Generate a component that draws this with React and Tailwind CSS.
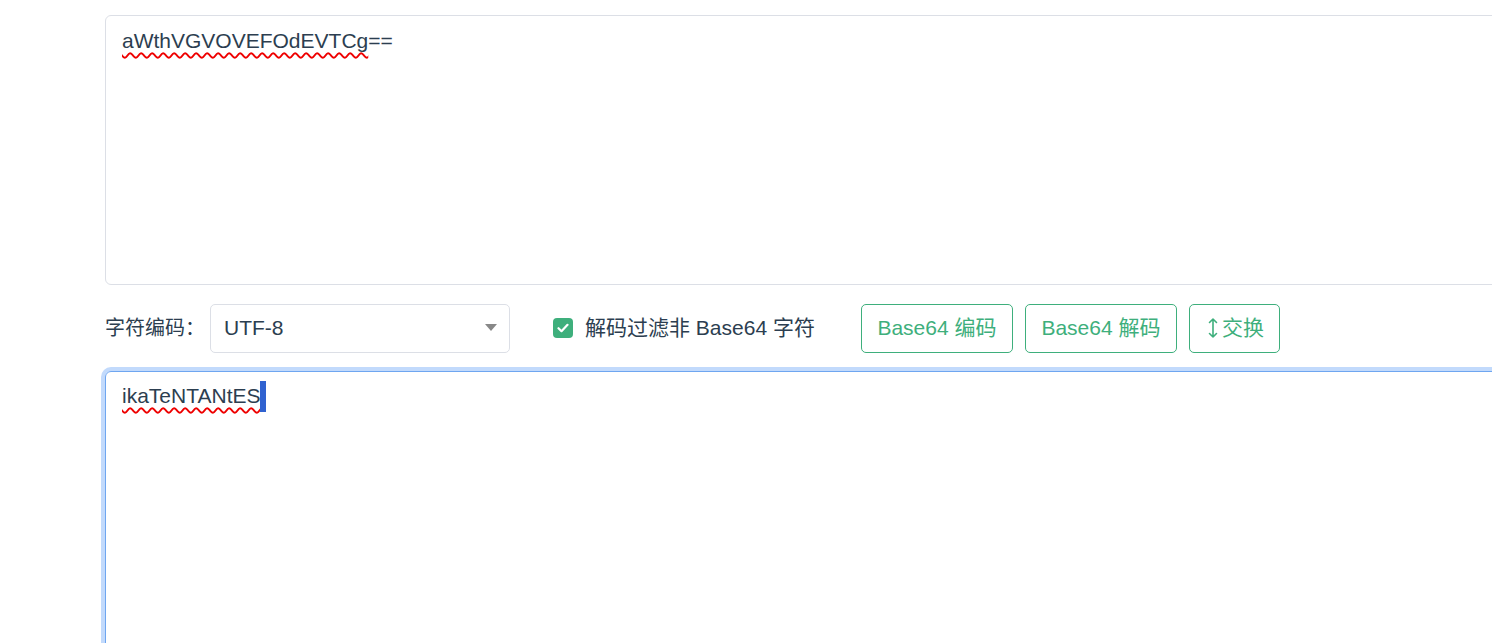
export default function App() {
  const font = { fontFamily: '"Liberation Sans", "Noto Sans CJK SC", sans-serif' };
  return (
    <div className="w-screen h-screen overflow-hidden bg-white text-[#2c3e50]" style={font}>
      <div className="pl-[105px] pt-[15px] w-[1560px]">
        <div className="h-[270px] border border-[#dcdfe6] rounded-[6px] px-[16px] pt-[10px] text-[21px] leading-[30px]">
          <span className="underline decoration-wavy decoration-[#e00] decoration-[1.5px] underline-offset-[4px]">aWthVGVOVEFOdEVTCg</span>==
        </div>
        <div className="flex items-center h-[48px] mt-[19px]">
          <span className="text-[20px] text-[#2c3e50]">字符编码：</span>
          <div className="ml-[5px] w-[300px] h-[49px] border border-[#dcdfe6] rounded-[5px] flex items-center justify-between pl-[13px] pr-[12px] text-[21px]">
            <span>UTF-8</span>
            <svg width="12" height="8" viewBox="0 0 12 8"><path d="M0 0h12L6 7z" fill="#888" /></svg>
          </div>
          <div className="ml-[43px] flex items-center">
            <span className="w-[20px] h-[20px] rounded-[4px] bg-[#3eaf7c] flex items-center justify-center">
              <svg width="12" height="10" viewBox="0 0 12 10"><path d="M1.5 5.2l3 3 6-6.4" stroke="white" strokeWidth="2.2" fill="none" strokeLinecap="round" strokeLinejoin="round" /></svg>
            </span>
            <span className="ml-[12px] text-[21px]">解码过滤非 Base64 字符</span>
          </div>
          <div className="ml-[46px] flex items-center gap-[12px] text-[21px] text-[#3eaf7c]">
            <button className="h-[49px] w-[152px] border border-[#3eaf7c] rounded-[5px]">Base64 编码</button>
            <button className="h-[49px] w-[152px] border border-[#3eaf7c] rounded-[5px]">Base64 解码</button>
            <button className="h-[49px] w-[91px] border border-[#3eaf7c] rounded-[5px] flex items-center justify-center pl-[3px]">
              <svg className="mr-[4px]" width="10" height="22" viewBox="0 0 10 22">
                <path d="M5 2v18M1.5 5.5L5 2l3.5 3.5M1.5 16.5L5 20l3.5-3.5" stroke="#3eaf7c" strokeWidth="1.6" fill="none" strokeLinecap="round" strokeLinejoin="round" />
              </svg>
              交换
            </button>
          </div>
        </div>
        <div className="mt-[19px] h-[300px] border border-[#6fa6f0] rounded-[6px] ring-4 ring-[#c2dafc] px-[16px] pt-[9px] text-[21px] leading-[30px] flex items-start">
          <span className="underline decoration-wavy decoration-[#e00] decoration-[1.5px] underline-offset-[4px]">ikaTeNTANtES</span>
          <span className="inline-block w-[6px] h-[31px] bg-[#3062d0]" />
        </div>
      </div>
    </div>
  );
}
